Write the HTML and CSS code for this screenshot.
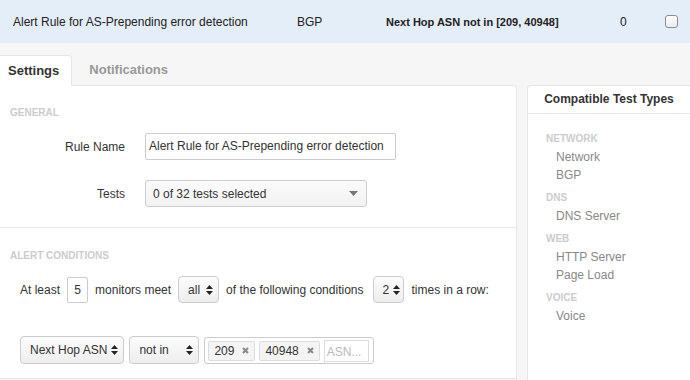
FILE: index.html
```html
<!DOCTYPE html>
<html>
<head>
    <title>Alert Rules</title>
    <link rel="stylesheet" href="styles.css">
</head>
<body>
    <div class="rule-row">
        <span class="rule-name">Alert Rule for AS-Prepending error detection</span>
        <span class="rule-type">BGP</span>
        <span class="rule-cond">Next Hop ASN not in [209, 40948]</span>
        <span class="rule-count">0</span>
        <span class="checkbox"></span>
    </div>

    <div class="tabs">
        <div class="tab active">Settings</div>
        <div class="tab">Notifications</div>
    </div>

    <div class="content">
        <div class="main-panel">
            <div class="section general">
                <div class="section-title">General</div>
                <div class="form-row">
                    <label>Rule Name</label>
                    <div class="text-input">Alert Rule for AS-Prepending error detection</div>
                </div>
                <div class="form-row">
                    <label>Tests</label>
                    <div class="dropdown">
                        <span>0 of 32 tests selected</span>
                        <svg width="9" height="5" viewBox="0 0 9 5"><path d="M0 0h9L4.5 5z" fill="#777"/></svg>
                    </div>
                </div>
            </div>

            <div class="section conditions">
                <div class="section-title">Alert Conditions</div>
                <div class="cond-row">
                    <span>At least</span>
                    <div class="num-input">5</div>
                    <span>monitors meet</span>
                    <div class="select sel-all">all <svg class="updown" width="7" height="10" viewBox="0 0 7 10"><path d="M0 4h7L3.5 0zM0 6h7L3.5 10z" fill="#222"/></svg></div>
                    <span>of the following conditions</span>
                    <div class="select sel-times">2 <svg class="updown" width="7" height="10" viewBox="0 0 7 10"><path d="M0 4h7L3.5 0zM0 6h7L3.5 10z" fill="#222"/></svg></div>
                    <span>times in a row:</span>
                </div>
                <div class="cond-row filter-row">
                    <div class="select">Next Hop ASN <svg class="updown" width="7" height="10" viewBox="0 0 7 10"><path d="M0 4h7L3.5 0zM0 6h7L3.5 10z" fill="#222"/></svg></div>
                    <div class="select sel-op">not in <svg class="updown" width="7" height="10" viewBox="0 0 7 10"><path d="M0 4h7L3.5 0zM0 6h7L3.5 10z" fill="#222"/></svg></div>
                    <div class="tag-box">
                        <span class="tag">209 <svg width="7" height="7" viewBox="0 0 7 7"><path d="M1 1l5 5M6 1l-5 5" stroke="#888" stroke-width="2"/></svg></span>
                        <span class="tag">40948 <svg width="7" height="7" viewBox="0 0 7 7"><path d="M1 1l5 5M6 1l-5 5" stroke="#888" stroke-width="2"/></svg></span>
                        <span class="tag-input">ASN...</span>
                    </div>
                </div>
            </div>
        </div>

        <div class="side-panel">
            <div class="side-header">Compatible Test Types</div>
            <div class="type-list">
                <div class="type-group">Network</div>
                <div class="type-item first">Network</div>
                <div class="type-item">BGP</div>
                <div class="type-group">DNS</div>
                <div class="type-item first">DNS Server</div>
                <div class="type-group">Web</div>
                <div class="type-item first">HTTP Server</div>
                <div class="type-item">Page Load</div>
                <div class="type-group">Voice</div>
                <div class="type-item first">Voice</div>
            </div>
        </div>
    </div>
</body>
</html>
```

FILE: styles.css
```css
body {
    font-family: "Liberation Sans", Arial, sans-serif;
    font-size: 12px;
    color: #333;
    margin: 0;
    background-color: #f6f6f6;
    overflow: hidden;
}

.rule-row {
    height: 43px;
    background-color: #e4eef8;
    display: grid;
    grid-template-columns: 284px 89px 234px 45px 13px;
    align-items: center;
    padding-left: 13px;
    color: #222;
}

.rule-cond {
    font-weight: bold;
    font-size: 11px;
}

.checkbox {
    width: 11px;
    height: 11px;
    border: 1px solid #8c8c8c;
    border-radius: 3px;
    background: linear-gradient(#fff, #ececec);
    margin-top: -1px;
}

.tabs {
    display: flex;
    gap: 9px;
    margin-top: 12px;
}

.tab {
    height: 30px;
    line-height: 30px;
    padding: 0 10px 0 8px;
    font-size: 13px;
    font-weight: bold;
    color: #999;
}

.tab.active {
    color: #333;
    background: white;
    border: 1px solid #e6e6e6;
    border-bottom: none;
    border-left: none;
    border-radius: 0 4px 0 0;
    position: relative;
    margin-bottom: -1px;
    padding-left: 8px;
    padding-right: 12px;
}

.content {
    display: flex;
    gap: 10px;
    align-items: flex-start;
}

.main-panel {
    width: 516px;
    background: white;
    border: 1px solid #e6e6e6;
    border-left: none;
    border-radius: 0 4px 0 0;
}

.section-title {
    padding-left: 10px;
    font-size: 10px;
    font-weight: bold;
    line-height: 12px;
    color: #ccc;
    text-transform: uppercase;
    margin-bottom: 14px;
}

.general {
    padding: 21px 0 20px;
    border-bottom: 1px solid #e8e8e8;
}

.form-row {
    display: flex;
    align-items: center;
    height: 27px;
    margin-bottom: 20px;
}

.form-row:last-child {
    margin-bottom: 0;
}

.form-row label {
    width: 125px;
    padding-right: 20px;
    text-align: right;
}

.text-input {
    width: 246px;
    height: 25px;
    line-height: 25px;
    padding-left: 3px;
    border: 1px solid #ccc;
    border-radius: 2px;
    white-space: nowrap;
    overflow: hidden;
}

.dropdown {
    width: 205px;
    height: 25px;
    display: flex;
    align-items: center;
    justify-content: space-between;
    padding: 0 8px 0 7px;
    border: 1px solid #ccc;
    border-radius: 3px;
    background: linear-gradient(#fbfbfb, #f2f2f2);
}

.conditions {
    padding: 22px 0 14px;
}

.cond-row {
    display: flex;
    align-items: center;
    gap: 7px;
    padding-left: 20px;
    height: 27px;
}

.num-input {
    width: 19px;
    height: 24px;
    line-height: 24px;
    text-align: center;
    border: 1px solid #ccc;
    border-radius: 2px;
}

.select {
    height: 100%;
    box-sizing: border-box;
    display: flex;
    align-items: center;
    justify-content: space-between;
    gap: 4px;
    padding: 0 5px 0 9px;
    border: 1px solid #ccc;
    border-radius: 4px;
    background: linear-gradient(#fcfcfc, #eeeeee);
}

.select svg {
    flex-shrink: 0;
}

.sel-all {
    width: 41px;
}

.sel-times {
    width: 31px;
    margin-left: 3px;
    padding-left: 8px;
}

.sel-op {
    width: 70px;
}

.filter-row {
    margin-top: 33px;
    height: 28px;
    gap: 5px;
}

.tag-box {
    width: 170px;
    height: 27px;
    box-sizing: border-box;
    align-self: flex-end;
    display: flex;
    align-items: center;
    gap: 4px;
    padding: 0 3px;
    border: 1px solid #ccc;
    border-radius: 3px;
}

.tag {
    height: 18px;
    display: flex;
    align-items: center;
    gap: 8px;
    padding: 0 5px;
    background: #f4f4f4;
    border: 1px solid #ddd;
    border-radius: 2px;
}

.tag-input {
    width: 45px;
    height: 22px;
    line-height: 22px;
    padding-left: 2px;
    box-sizing: border-box;
    color: #bbb;
    border: 1px solid #ddd;
}

.side-panel {
    flex: 1;
    height: 294px;
    background: white;
    border: 1px solid #e6e6e6;
    border-right: none;
    border-bottom: none;
    border-radius: 4px 0 0 0;
}

.side-header {
    height: 27px;
    line-height: 27px;
    text-align: center;
    font-weight: bold;
    border-bottom: 1px solid #e6e6e6;
}

.type-list {
    padding: 19px 0 0 18px;
}

.type-group {
    font-size: 10px;
    font-weight: bold;
    line-height: 12px;
    color: #ccc;
    text-transform: uppercase;
    margin-top: 8px;
}

.type-group:first-child {
    margin-top: 0;
}

.type-item {
    padding-left: 10px;
    line-height: 18px;
    color: #888;
}

.type-item.first {
    margin-top: 3px;
}
```
